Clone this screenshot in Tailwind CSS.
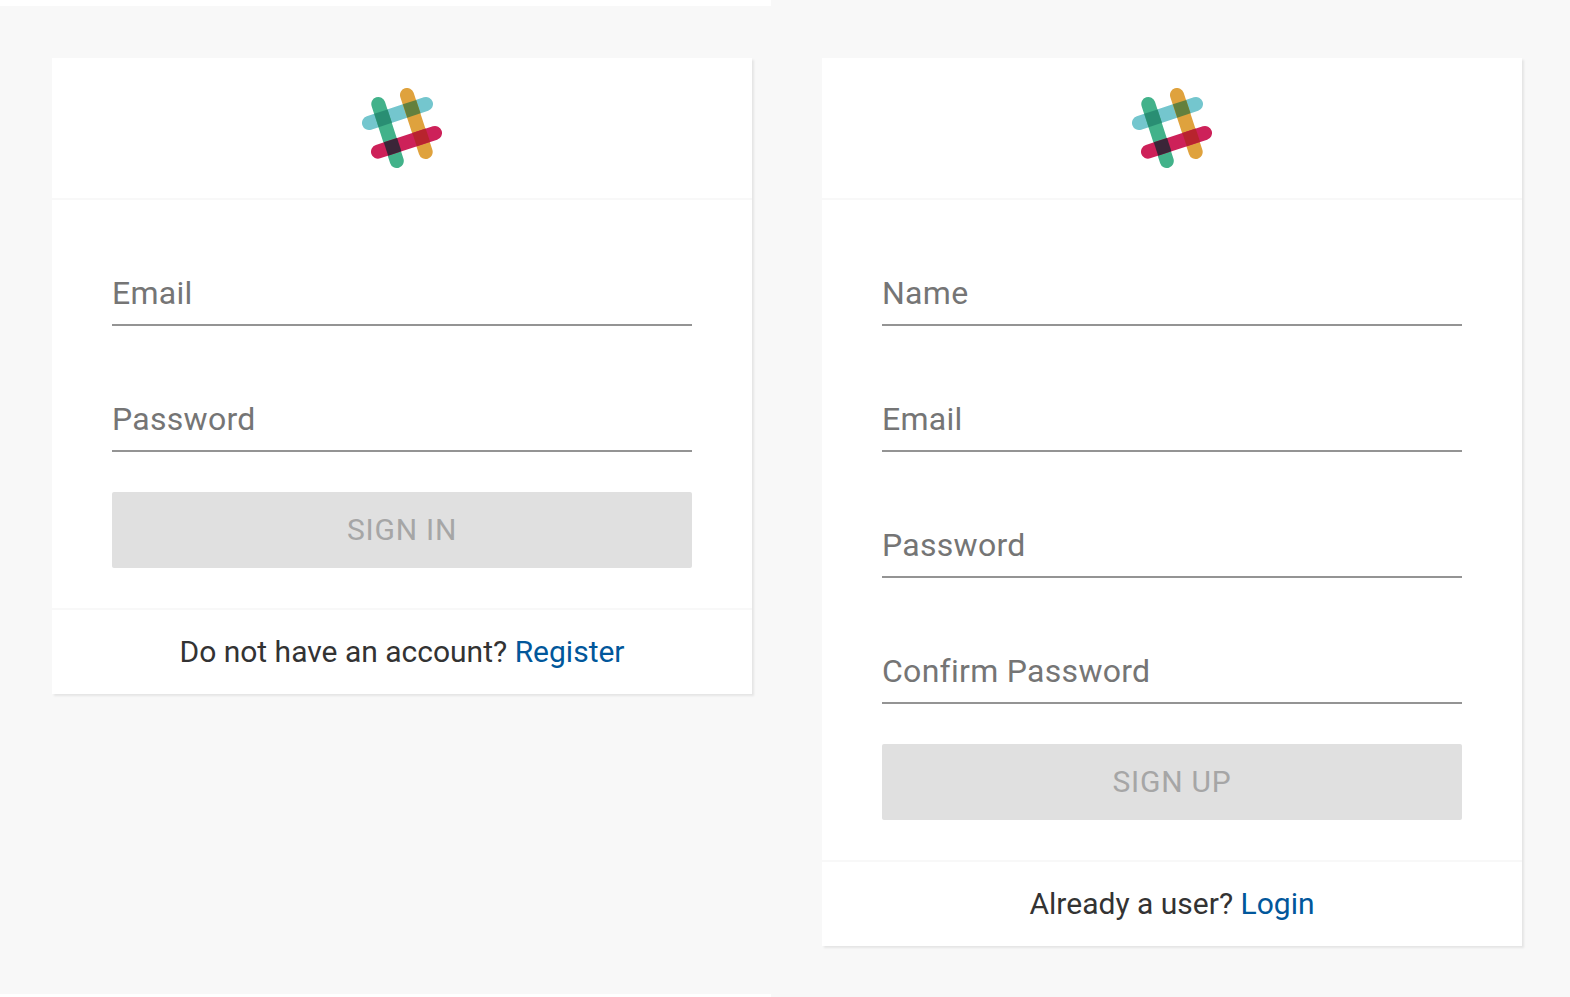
<!DOCTYPE html>
<html lang="en">
<head>
<meta charset="utf-8">
<meta name="viewport" content="width=device-width, initial-scale=1">
<title>Sign in or register</title>
<script src="https://cdn.jsdelivr.net/npm/@tailwindcss/browser@4"></script>
</head>
<body class="bg-white font-[Roboto,sans-serif] text-[30px] text-[#333333]">
<svg class="hidden" aria-hidden="true">
  <symbol id="logo" viewBox="0 0 80 80">
    <g fill="none" stroke-width="14" stroke-linecap="round">
      <path stroke="#74c6ce" d="M7 35 64 16"/>
      <path stroke="#dfa23d" d="M45 7 63.7 64"/>
      <path stroke="#42b28a" d="M16.3 16 34.8 73"/>
      <path stroke="#cd2159" d="M16 63.7 73 45"/>
    </g>
    <path fill="#298e73" transform="translate(21.1 30.3) rotate(-18.2)" d="M-7-7H7V7H-7Z"/>
    <path fill="#63803e" transform="translate(49.7 20.8) rotate(-18.2)" d="M-7-7H7V7H-7Z"/>
    <path fill="#3b2538" transform="translate(30.6 58.8) rotate(-18.2)" d="M-7-7H7V7H-7Z"/>
    <path fill="#b8242e" transform="translate(59.2 49.4) rotate(-18.2)" d="M-7-7H7V7H-7Z"/>
  </symbol>
</svg>
<main class="grid min-h-screen grid-cols-[771fr_799fr]">
  <section id="login" class="mt-1.5 mb-[3px] bg-[#f8f8f8] pt-[52px] pr-[19px] pl-[52px]">
    <form class="bg-white shadow-[2px_2px_2px_rgba(0,0,0,0.08)]">
      <header class="flex h-[142px] items-center justify-center border-b-2 border-[#f8f8f8]">
        <svg class="size-20" role="img" aria-label="Logo"><use href="#logo"/></svg>
      </header>
      <div class="flex flex-col px-[60px] pt-[60px] pb-10">
        <div class="flex flex-col gap-[60px]">
          <!-- Floating labels: they rest over the empty input and rise on focus -->
          <div class="relative">
            <input id="in-email" type="email" placeholder=" " class="peer block h-[66px] w-full border-b-2 border-[#949494] text-[32px] outline-none">
            <label for="in-email" class="pointer-events-none absolute inset-0 flex origin-top-left -translate-y-5 scale-75 items-center text-[32px] tracking-[0.009em] text-[#757575] peer-placeholder-shown:translate-y-0 peer-placeholder-shown:scale-100 peer-focus:-translate-y-5 peer-focus:scale-75">Email</label>
          </div>
          <div class="relative">
            <input id="in-password" type="password" placeholder=" " class="peer block h-[66px] w-full border-b-2 border-[#949494] text-[32px] outline-none">
            <label for="in-password" class="pointer-events-none absolute inset-0 flex origin-top-left -translate-y-5 scale-75 items-center text-[32px] tracking-[0.009em] text-[#757575] peer-placeholder-shown:translate-y-0 peer-placeholder-shown:scale-100 peer-focus:-translate-y-5 peer-focus:scale-75">Password</label>
          </div>
        </div>
        <button type="submit" disabled class="mt-10 h-[76px] rounded-xs bg-[#e0e0e0] pb-0.5 tracking-wide text-[#a6a6a6]">SIGN IN</button>
      </div>
      <footer class="flex h-[86px] items-center justify-center border-t-2 border-[#f8f8f8] pb-0.5">
        <p>Do not have an account? <a href="#register" class="text-[#01579b]">Register</a></p>
      </footer>
    </form>
  </section>
  <section id="register" class="bg-[#f8f8f8] pt-[58px] pr-12 pl-[51px]">
    <form class="bg-white shadow-[2px_2px_2px_rgba(0,0,0,0.08)]">
      <header class="flex h-[142px] items-center justify-center border-b-2 border-[#f8f8f8]">
        <svg class="size-20" role="img" aria-label="Logo"><use href="#logo"/></svg>
      </header>
      <div class="flex flex-col px-[60px] pt-[60px] pb-10">
        <div class="flex flex-col gap-[60px]">
          <div class="relative">
            <input id="up-name" type="text" placeholder=" " class="peer block h-[66px] w-full border-b-2 border-[#949494] text-[32px] outline-none">
            <label for="up-name" class="pointer-events-none absolute inset-0 flex origin-top-left -translate-y-5 scale-75 items-center text-[32px] tracking-[0.009em] text-[#757575] peer-placeholder-shown:translate-y-0 peer-placeholder-shown:scale-100 peer-focus:-translate-y-5 peer-focus:scale-75">Name</label>
          </div>
          <div class="relative">
            <input id="up-email" type="email" placeholder=" " class="peer block h-[66px] w-full border-b-2 border-[#949494] text-[32px] outline-none">
            <label for="up-email" class="pointer-events-none absolute inset-0 flex origin-top-left -translate-y-5 scale-75 items-center text-[32px] tracking-[0.009em] text-[#757575] peer-placeholder-shown:translate-y-0 peer-placeholder-shown:scale-100 peer-focus:-translate-y-5 peer-focus:scale-75">Email</label>
          </div>
          <div class="relative">
            <input id="up-password" type="password" placeholder=" " class="peer block h-[66px] w-full border-b-2 border-[#949494] text-[32px] outline-none">
            <label for="up-password" class="pointer-events-none absolute inset-0 flex origin-top-left -translate-y-5 scale-75 items-center text-[32px] tracking-[0.009em] text-[#757575] peer-placeholder-shown:translate-y-0 peer-placeholder-shown:scale-100 peer-focus:-translate-y-5 peer-focus:scale-75">Password</label>
          </div>
          <div class="relative">
            <input id="up-confirm" type="password" placeholder=" " class="peer block h-[66px] w-full border-b-2 border-[#949494] text-[32px] outline-none">
            <label for="up-confirm" class="pointer-events-none absolute inset-0 flex origin-top-left -translate-y-5 scale-75 items-center text-[32px] tracking-[0.009em] text-[#757575] peer-placeholder-shown:translate-y-0 peer-placeholder-shown:scale-100 peer-focus:-translate-y-5 peer-focus:scale-75">Confirm Password</label>
          </div>
        </div>
        <button type="submit" disabled class="mt-10 h-[76px] rounded-xs bg-[#e0e0e0] pb-0.5 tracking-wide text-[#a6a6a6]">SIGN UP</button>
      </div>
      <footer class="flex h-[86px] items-center justify-center border-t-2 border-[#f8f8f8] pb-0.5">
        <p>Already a user? <a href="#login" class="text-[#01579b]">Login</a></p>
      </footer>
    </form>
  </section>
</main>
</body>
</html>
